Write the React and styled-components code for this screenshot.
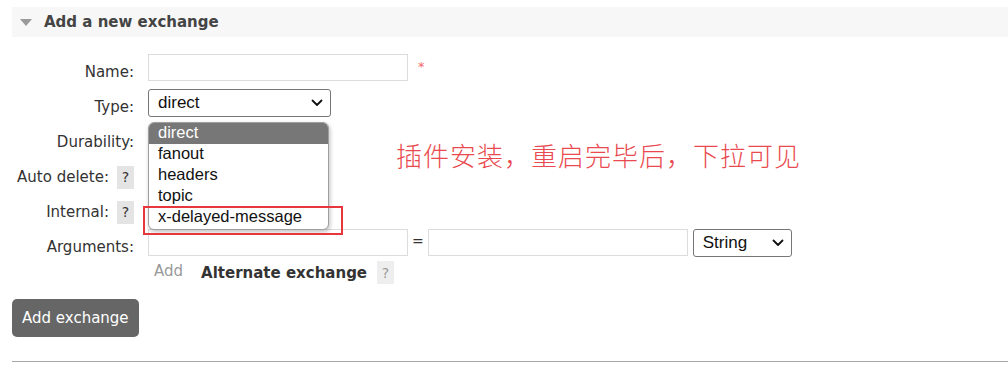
import React from 'react';
import styled, { createGlobalStyle } from 'styled-components';

const GlobalStyle = createGlobalStyle`
  body {
    margin: 0;
    background: #ffffff;
    font-family: "DejaVu Sans", Verdana, sans-serif;
    color: #333;
  }
`;

const Page = styled.div`
  width: 1008px;
  height: 372px;
  padding: 7px 0 0 12px;
  box-sizing: border-box;
  overflow: hidden;
`;

const SectionHeader = styled.div`
  height: 30px;
  background: #f7f7f7;
  display: flex;
  align-items: center;
  padding-left: 8px;
  gap: 12px;
  font-size: 15px;
  font-weight: bold;
  color: #444;
`;

const Triangle = styled.span`
  width: 0;
  height: 0;
  margin-top: 1px;
  border-left: 6px solid transparent;
  border-right: 6px solid transparent;
  border-top: 7px solid #9a9a9a;
`;

const Form = styled.div`
  position: relative;
  padding-top: 17px;
`;

const Row = styled.div`
  display: grid;
  grid-template-columns: 122px auto;
  column-gap: 14px;
  height: 35px;
`;

const Label = styled.div`
  display: flex;
  justify-content: flex-end;
  align-items: center;
  gap: 8px;
  height: 22px;
  padding-top: 7px;
  font-size: 15px;
  color: #333;
`;

const Help = styled.span`
  display: inline-flex;
  align-items: center;
  justify-content: center;
  width: 17px;
  height: 23px;
  background: ${(p) => (p.light ? '#eeeeee' : '#e4e4e4')};
  color: ${(p) => (p.light ? '#9a9a9a' : '#333')};
  font-size: 14px;
`;

const Fields = styled.div`
  display: flex;
  align-items: flex-start;
`;

const TextInput = styled.div`
  width: ${(p) => p.width}px;
  height: 27px;
  box-sizing: border-box;
  border: 1px solid #dcdcdc;
  background: #fff;
`;

const Required = styled.span`
  color: #f36a6a;
  font-size: 13px;
  margin: 5px 0 0 10px;
`;

const Equals = styled.span`
  font-size: 14px;
  color: #333;
  padding: 4px 4px 0 4px;
`;

const SelectBox = styled.div`
  position: relative;
  width: ${(p) => p.width}px;
  height: 28px;
  margin-left: ${(p) => p.offset || 0}px;
  box-sizing: border-box;
  border: 1px solid #767676;
  border-radius: 3px;
  background: #fff;
  display: flex;
  align-items: center;
  justify-content: space-between;
  padding: 0 7px 0 9px;
  font-family: "Liberation Sans", Arial, sans-serif;
  font-size: 17px;
  color: #111;
`;

const Chevron = () => (
  <svg width="12" height="8" viewBox="0 0 12 8">
    <path d="M1.5 1.5 L6 6 L10.5 1.5" fill="none" stroke="#111" strokeWidth="1.8" strokeLinecap="round" strokeLinejoin="round" />
  </svg>
);

const DropList = styled.ul`
  position: absolute;
  top: 32px;
  left: -1px;
  width: 181px;
  margin: 0;
  padding: 0 0 1px;
  list-style: none;
  box-sizing: border-box;
  background: #fff;
  border: 1px solid #a0a0a0;
  border-radius: 6px;
  box-shadow: 1px 2px 4px rgba(0, 0, 0, 0.25);
  z-index: 2;
`;

const DropItem = styled.li`
  height: 21px;
  line-height: 19px;
  padding-left: 9px;
  font-family: "Liberation Sans", Arial, sans-serif;
  font-size: 16.5px;
  color: ${(p) => (p.active ? '#fff' : '#111')};
  background: ${(p) => (p.active ? '#777777' : 'transparent')};
  border-radius: ${(p) => (p.active ? '5px 5px 0 0' : '0')};
`;

const Highlight = styled.div`
  position: absolute;
  left: -6px;
  top: 116px;
  width: 200px;
  height: 29px;
  box-sizing: border-box;
  border: 2px solid #e8373c;
  z-index: 3;
`;

const Annotation = styled.div`
  position: absolute;
  left: 384px;
  top: 99px;
  font-family: "Noto Sans CJK SC", sans-serif;
  font-weight: 300;
  font-size: 26px;
  letter-spacing: 1px;
  color: #ea4a4f;
`;

const ExtraRow = styled.div`
  display: flex;
  align-items: center;
  height: 23px;
  margin: -3px 0 0 142px;
`;

const AddLink = styled.span`
  font-size: 15px;
  color: #999;
  margin-right: 18px;
  margin-top: -4px;
`;

const SubTitle = styled.span`
  font-size: 15px;
  font-weight: bold;
  color: #333;
  margin-right: 10px;
`;

const Button = styled.button`
  margin-top: 15px;
  height: 38px;
  padding: 0 10px;
  border: none;
  border-radius: 5px;
  background: #666;
  color: #fff;
  font-family: "DejaVu Sans", Verdana, sans-serif;
  font-size: 15px;
`;

const Divider = styled.hr`
  margin: 24px 0 0;
  border: none;
  border-top: 1px solid #a6a6a6;
`;

const types = ['direct', 'fanout', 'headers', 'topic', 'x-delayed-message'];

export default function App() {
  return (
    <Page>
      <GlobalStyle />
      <SectionHeader>
        <Triangle />
        Add a new exchange
      </SectionHeader>
      <Form>
        <Row>
          <Label>Name:</Label>
          <Fields>
            <TextInput width={260} />
            <Required>*</Required>
          </Fields>
        </Row>
        <Row>
          <Label>Type:</Label>
          <Fields>
            <SelectBox width={183}>
              direct
              <Chevron />
              <DropList>
                {types.map((t, i) => (
                  <DropItem key={t} active={i === 0}>{t}</DropItem>
                ))}
              </DropList>
              <Highlight />
            </SelectBox>
          </Fields>
        </Row>
        <Row>
          <Label>Durability:</Label>
        </Row>
        <Row>
          <Label>Auto delete:<Help>?</Help></Label>
        </Row>
        <Row>
          <Label>Internal:<Help>?</Help></Label>
        </Row>
        <Row>
          <Label>Arguments:</Label>
          <Fields>
            <TextInput width={260} />
            <Equals>=</Equals>
            <TextInput width={260} />
            <SelectBox width={99} offset={5}>
              String
              <Chevron />
            </SelectBox>
          </Fields>
        </Row>
        <ExtraRow>
          <AddLink>Add</AddLink>
          <SubTitle>Alternate exchange</SubTitle>
          <Help light>?</Help>
        </ExtraRow>
        <Button>Add exchange</Button>
        <Divider />
        <Annotation>插件安装，重启完毕后，下拉可见</Annotation>
      </Form>
    </Page>
  );
}
